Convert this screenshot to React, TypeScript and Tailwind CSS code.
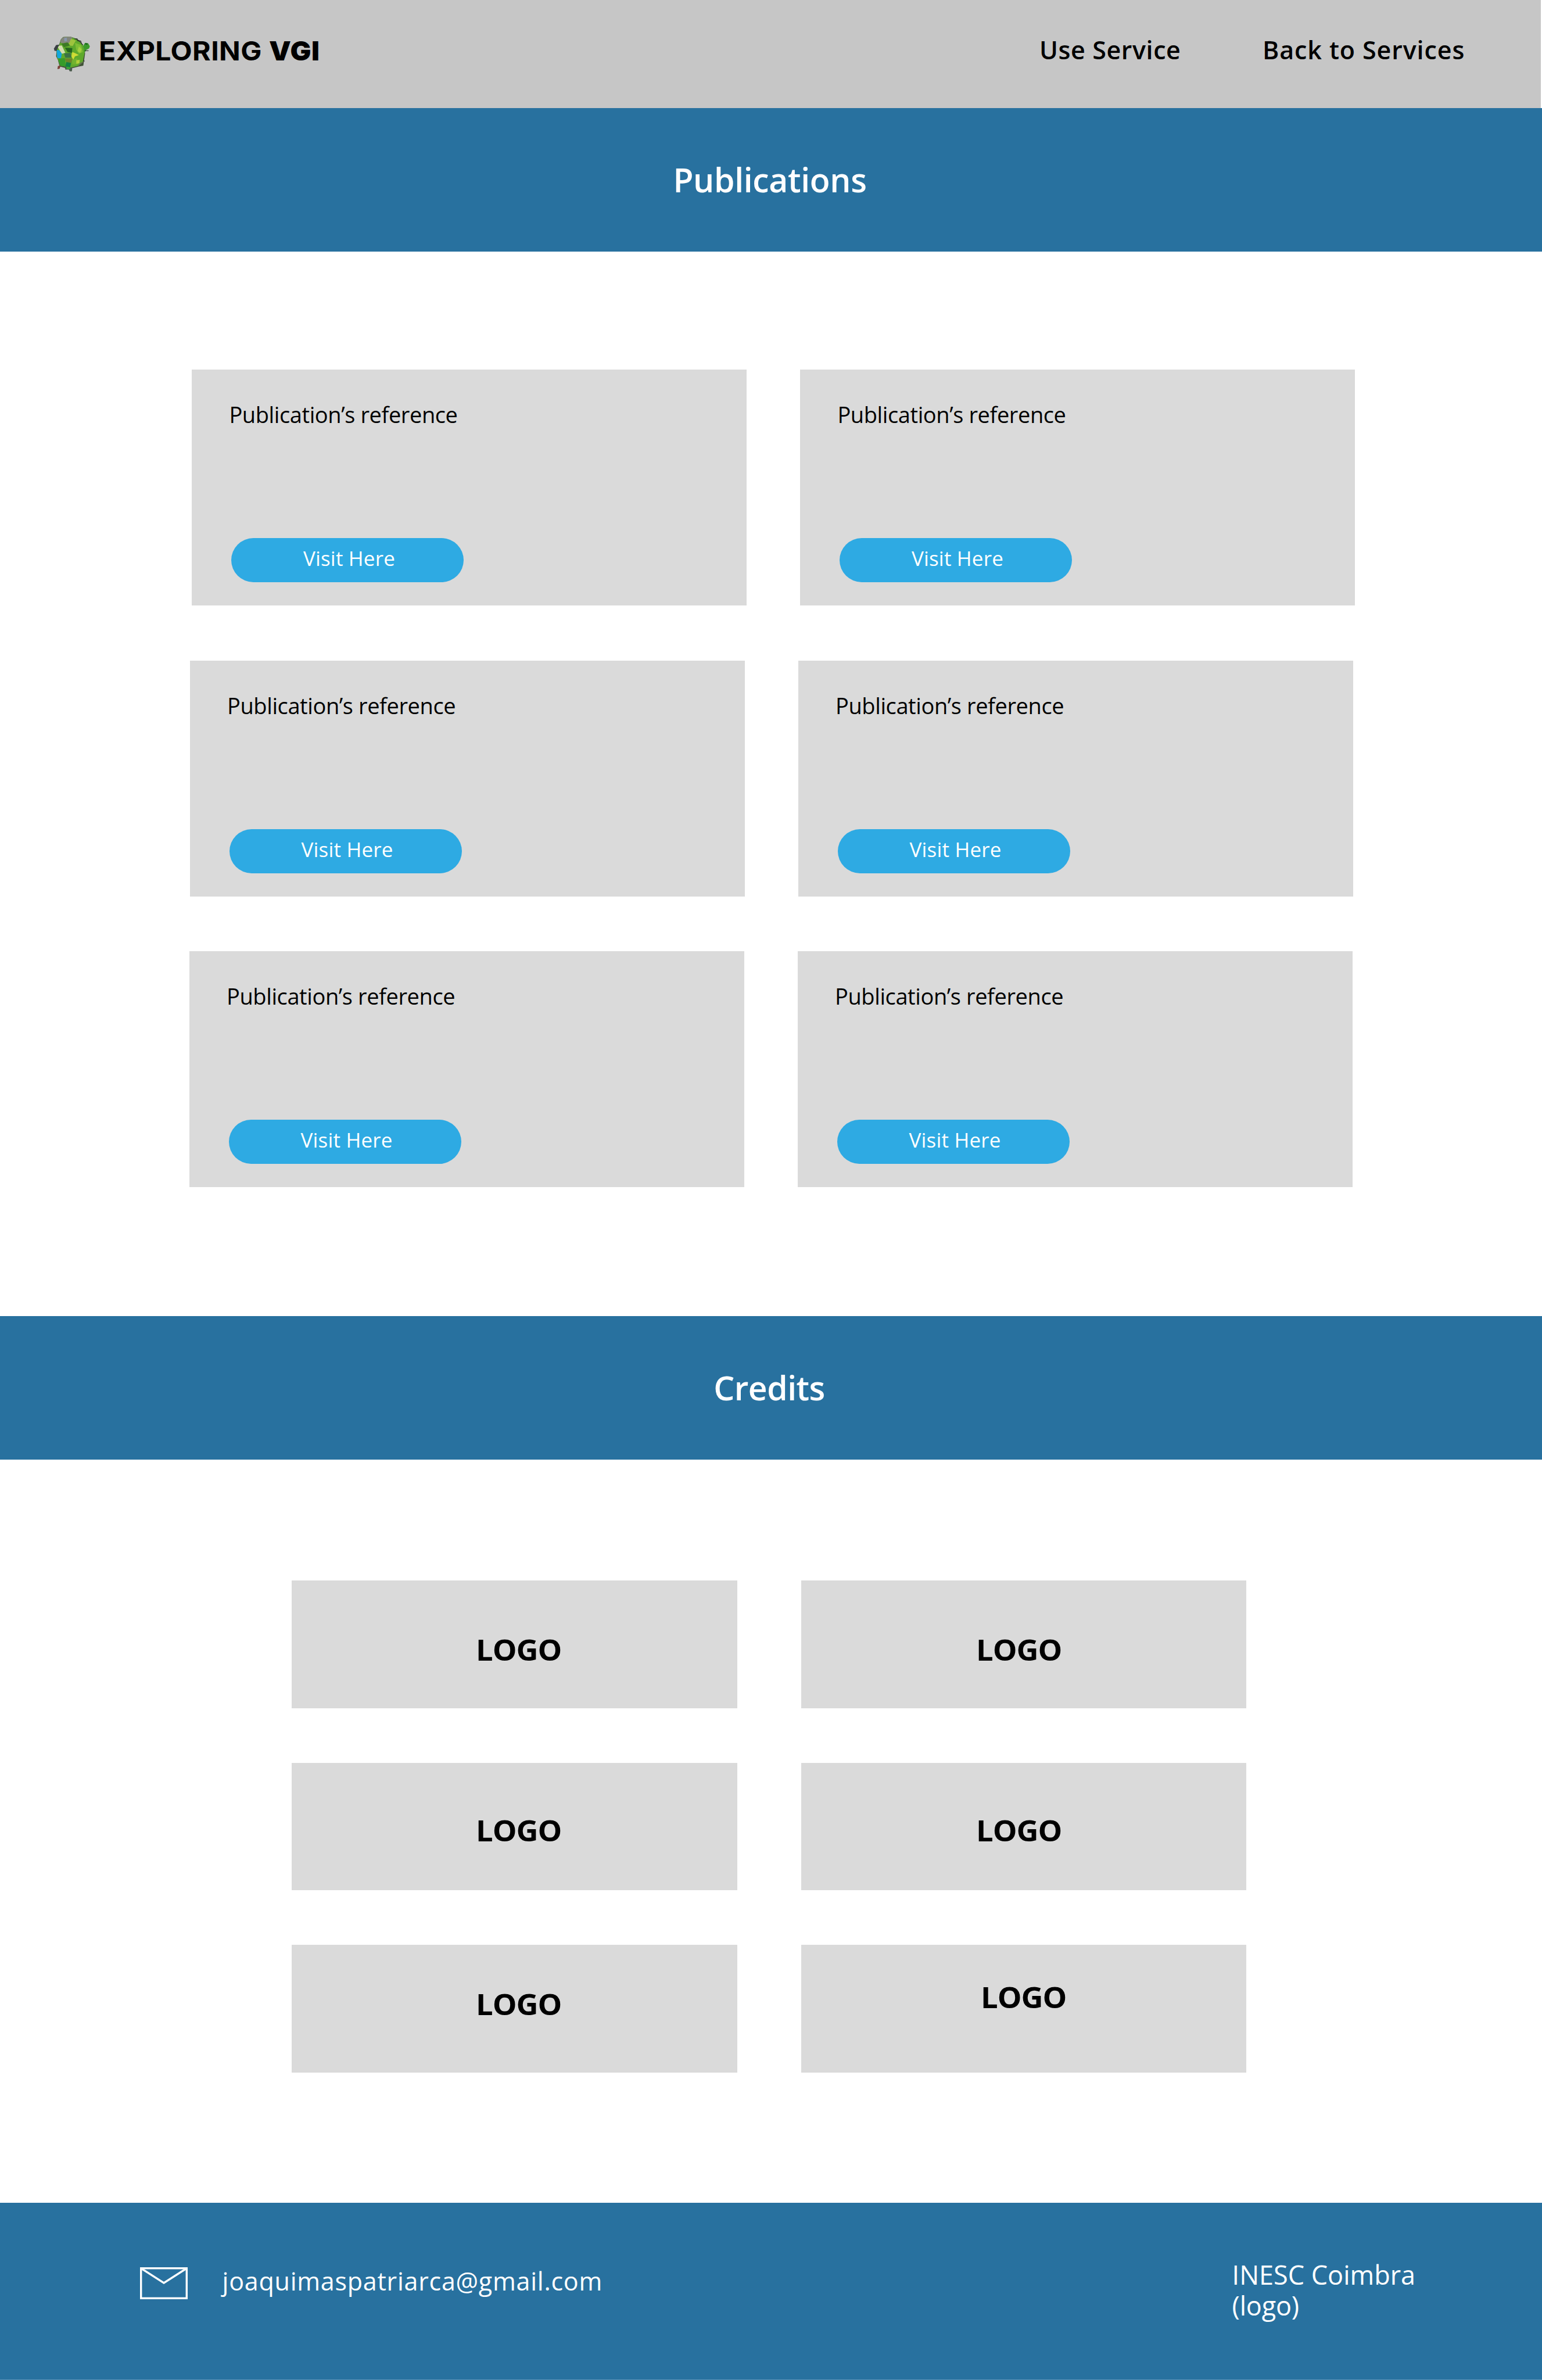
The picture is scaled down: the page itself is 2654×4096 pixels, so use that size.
import type { ReactNode } from "react";

function GlobeLogo() {
  return (
    <svg viewBox="0 0 110 100" className="mt-[53px] h-[76px] w-[83px] shrink-0" aria-hidden="true">
      <defs>
        <clipPath id="globe-body">
          <path d="M30 18 L36 14 L50 13 L60 17 L70 24 L79 32 L82 42 L83 50 L80 64 L79 72 L70 79 L58 82 L48 84 L38 81 L27 79 L24 70 L20 60 L19 46 L22 38 L27 28 Z" />
        </clipPath>
      </defs>
      <path d="M13 40 L18 32 L25 31 L24 42 L20 46 L14 45 Z" fill="#3b4045" />
      <path d="M29 19 L34 14 L50 13 L59 16 L70 21 L78 30 L83 42 L84 52 L82 66 L80 79 L70 81 L58 84 L46 86 L26 81 L22 66 L18 58 L19 44 L24 34 Z" fill="#3f5136" />
      <path d="M79 35 L84 27 L91 28 L95 35 L93 40 L87 43 L82 51 Z" fill="#3c9a2c" />
      <path d="M83 30 L86 27 L91 29 L88 32 Z" fill="#206b23" />
      <path d="M38 83 L55 83 L54 92 L49 92 L47 88 L39 88 Z" fill="#4a5a4c" />
      <path d="M41 82 L50 82 L50 87 L42 87 Z" fill="#35a832" />
      <path d="M22 80 L29 78 L26 86 L21 87 Z" fill="#7b4238" />
      <g clipPath="url(#globe-body)">
        <rect x="10" y="10" width="80" height="80" fill="#5fa92c" />
        <path d="M28 12 H56 L52 26 L38 29 L26 26 Z" fill="#83867c" />
        <path d="M36 17 L42 15 L43 23 L37 24 Z" fill="#8796ad" />
        <path d="M52 18 L63 22 L56 34 L45 33 Z" fill="#9fc33e" />
        <path d="M30 29 L44 26 L50 33 L36 37 Z" fill="#3c7a24" />
        <path d="M20 34 L31 33 L39 50 L31 52 Z" fill="#d2ddb0" />
        <path d="M17 43 L25 44 L31 52 L29 63 L21 62 Z" fill="#12a6dc" />
        <path d="M38 38 L55 39 L54 50 L44 48 Z" fill="#24641f" />
        <path d="M36 51 L51 50 L53 61 L39 61 Z" fill="#3b7245" />
        <path d="M55 48 L62 51 L70 55 L61 58 L57 66 L53 58 Z" fill="#d0dc35" />
        <path d="M61 27 L75 32 L79 48 L70 52 L64 43 Z" fill="#7fbe35" />
        <path d="M70 35 L76 42 L73 50 L67 46 Z" fill="#a5d040" />
        <path d="M23 63 L38 62 L40 82 L24 79 Z" fill="#369b29" />
        <path d="M37 63 L56 63 L52 74 L41 71 Z" fill="#6e852a" />
        <path d="M41 71 L52 73 L50 83 L39 81 Z" fill="#148042" />
        <path d="M54 66 L66 62 L68 76 L55 77 Z" fill="#72b32f" />
        <path d="M64 67 L72 66 L71 74 L64 75 Z" fill="#b3cf3c" />
        <path d="M72 74 L82 68 V82 H66 Z" fill="#666c56" />
      </g>
      <path d="M60 18 L66 18 L67 22 L74 23 L76 29 L79 32 M83 45 L92 45 M80 68 L83 69" fill="none" stroke="#222a20" strokeWidth="1.5" />
    </svg>
  );
}

function EnvelopeIcon() {
  return (
    <svg viewBox="0 0 82 55" className="mt-[111px] ml-[240.6px] h-[55px] w-[82px] shrink-0" fill="none" stroke="white" strokeWidth="3.4" aria-hidden="true">
      <rect x="1.7" y="1.7" width="78.6" height="51.6" />
      <path d="M2 2 L41 27 L80 2" />
    </svg>
  );
}

function Banner({ children }: { children: ReactNode }) {
  return (
    <div className="flex h-[247px] items-center justify-center bg-[#28719f] text-[57px] font-semibold text-white">
      {children}
    </div>
  );
}

function PublicationCard() {
  return (
    <article className="flex h-[406px] w-[955px] shrink-0 flex-col items-start bg-[#dadada] pt-[52px]">
      <p className="ml-[64px] text-[38px] leading-[50px] tracking-[-0.4px]">Publication’s reference</p>
      <button className="mt-[188px] ml-[67.6px] flex h-[76px] w-[400px] items-center justify-center rounded-full bg-[#2eaae3] pb-[7px] pl-[6px] text-[35px] leading-none tracking-[0.2px] text-white">
        Visit Here
      </button>
    </article>
  );
}

const publicationRows = ["ml-[330.4px] mt-[203px]", "ml-[327px] mt-[95px]", "ml-[326px] mt-[94px]"];

const creditRows = [
  ["pl-[316.6px] pt-[88px]", "pl-[301.2px] pt-[88px]"],
  ["pl-[316.6px] pt-[85.7px]", "pl-[301.2px] pt-[85.7px]"],
  ["pl-[316.6px] pt-[71.3px]", "pl-[309.7px] pt-[59px]"],
];

export default function App() {
  return (
    <div className="flex h-[4096px] w-[2654px] flex-col overflow-hidden bg-white font-['Open_Sans',sans-serif] text-black">
      <header className="mr-[2px] flex h-[186px] shrink-0 items-start bg-[#c6c6c6] pl-[83px]">
        <GlobeLogo />
        <div className="mt-[58px] ml-[4px] flex w-[1619px] shrink-0 font-['Inter',sans-serif] text-[45px] leading-[60px] whitespace-nowrap">
          <span className="w-[293px] origin-left scale-x-[1.07] font-bold tracking-[0.4px]">EXPLORING</span>
          <span className="origin-left scale-x-[1.06] font-black tracking-[0.6px]">VGI</span>
        </div>
        <nav className="mt-[56px] flex text-[43px] leading-[60px] font-semibold whitespace-nowrap">
          <a className="w-[384px] tracking-[0.6px]">Use Service</a>
          <a className="tracking-[0.9px]">Back to Services</a>
        </nav>
      </header>

      <Banner>
        <h1 className="mr-[4px] tracking-[-0.32px]">Publications</h1>
      </Banner>
      <main className="flex h-[1832px] shrink-0 flex-col">
        {publicationRows.map((offset) => (
          <section key={offset} className={`flex gap-[92px] ${offset}`}>
            <PublicationCard />
            <PublicationCard />
          </section>
        ))}
      </main>

      <Banner>
        <h2 className="mr-[6px] tracking-[-0.5px]">Credits</h2>
      </Banner>
      <section className="grid h-[1279px] shrink-0 grid-cols-[766.5px_766.5px] content-start gap-x-[110px] gap-y-[94px] pt-[208px] pl-[502px]">
        {creditRows.flat().map((offset, i) => (
          <div key={i} className={`h-[219.5px] bg-[#dadada] text-[51px] leading-[60px] font-bold ${offset}`}>
            <span className="inline-block origin-left scale-x-[1.03] tracking-[-1px]">LOGO</span>
          </div>
        ))}
      </section>

      <footer className="flex h-[305px] shrink-0 items-start border-b border-[#5b93b8] bg-[#28719f] text-white">
        <EnvelopeIcon />
        <p className="mt-[104.7px] ml-[60px] w-[1738px] shrink-0 text-[43px] leading-[60px] tracking-[0.76px]">joaquimaspatriarca@gmail.com</p>
        <p className="mt-[97px] text-[45px] leading-[53.4px] whitespace-nowrap">
          INESC Coimbra
          <br />
          <span className="tracking-[-0.2px]">(logo)</span>
        </p>
      </footer>
    </div>
  );
}
